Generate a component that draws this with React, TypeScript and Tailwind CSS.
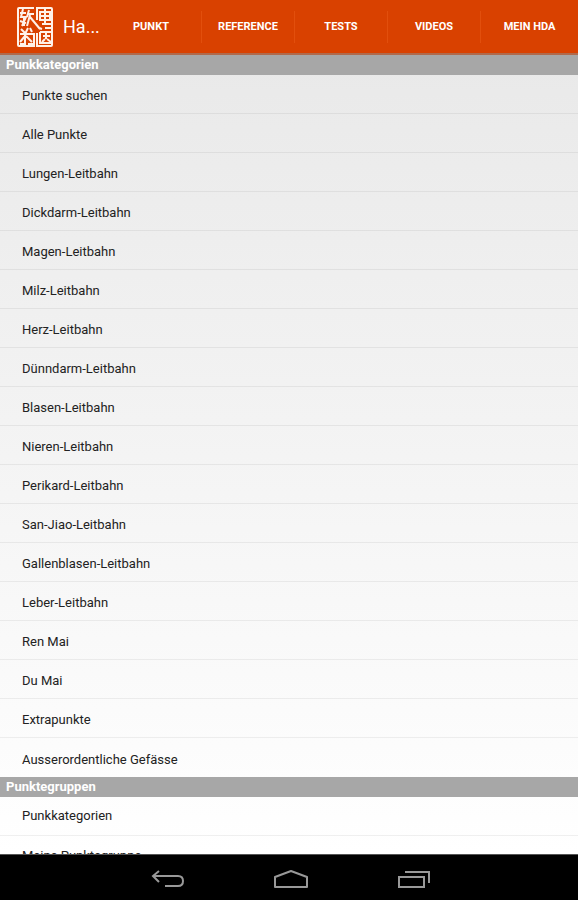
const tabs = ['PUNKT', 'REFERENCE', 'TESTS', 'VIDEOS', 'MEIN HDA'];

const sections = [
  {
    title: 'Punkkategorien',
    items: [
      'Punkte suchen',
      'Alle Punkte',
      'Lungen-Leitbahn',
      'Dickdarm-Leitbahn',
      'Magen-Leitbahn',
      'Milz-Leitbahn',
      'Herz-Leitbahn',
      'Dünndarm-Leitbahn',
      'Blasen-Leitbahn',
      'Nieren-Leitbahn',
      'Perikard-Leitbahn',
      'San-Jiao-Leitbahn',
      'Gallenblasen-Leitbahn',
      'Leber-Leitbahn',
      'Ren Mai',
      'Du Mai',
      'Extrapunkte',
      'Ausserordentliche Gefässe',
    ],
  },
  { title: 'Punktegruppen', items: ['Punkkategorien', 'Meine Punktegruppe'] },
];

function SealLogo() {
  return (
    <svg width="38" height="42" viewBox="0 0 38 42" fill="none" stroke="#fff1e8" aria-hidden="true" className="shrink-0">
      <path strokeWidth="2" d="M18 2H3Q2 2 2 3V39Q2 40 3 40H18V27M21 14V2H35Q36 2 36 3V39Q36 40 35 40H21V27" />
      <g strokeWidth="2">
        <path d="M4 7H10M7 3L5 11H10L6 20M8 12V20M4 15L10 17M13 4L11 11M12 8H18M14 9L11 20M14 11L24 23" />
        <path d="M5 23L9 27M12 22L9 28M4 28H17M9 27V39M9 30L4 36M10 30L16 36M14 22L16 26M4 38H8M12 38H17" />
        <path d="M24 6H34V14H24ZM29 3V19M24 10H34M26 18H35M29 22H35" />
        <path d="M24 26H35M24 26V37H35M27 30H34M30 27V33M29 33L26 36M31 33L35 36M23 22L26 23" />
      </g>
    </svg>
  );
}

function BackIcon() {
  return (
    <svg width="34" height="20" viewBox="0 0 34 20" fill="none" stroke="#999" strokeWidth="2" aria-hidden="true">
      <path d="M8 1L2 6L8 12M2 6H27Q32 6 32 11Q32 16 27 16H14" />
    </svg>
  );
}

function HomeIcon() {
  return (
    <svg width="36" height="20" viewBox="0 0 36 20" fill="none" stroke="#999" strokeWidth="2" aria-hidden="true">
      <path d="M2 17V7L18 1L34 7V17Z" strokeLinejoin="round" />
    </svg>
  );
}

function RecentIcon() {
  return (
    <svg width="34" height="20" viewBox="0 0 34 20" fill="none" stroke="#999" strokeWidth="2" aria-hidden="true">
      <path d="M2 7H27V17H2ZM8 2H32V13" />
    </svg>
  );
}

export default function App() {
  return (
    <div className="flex h-screen flex-col overflow-hidden bg-white font-['Roboto',sans-serif]">
      <header className="flex h-[55px] shrink-0 items-center border-b-2 border-[#b06a4c] bg-[#d94100] text-white">
        <h1 className="flex w-[101px] shrink-0 items-center gap-[9px] pl-4 text-lg font-normal">
          <SealLogo />
          Ha...
        </h1>
        <nav className="grid flex-1 grid-cols-[101fr_93fr_93fr_93fr_97fr] divide-x divide-[#e24f0d]">
          {tabs.map((tab) => (
            <button key={tab} type="button" className="h-8 pt-0.5 text-[11px] font-bold whitespace-nowrap">
              {tab}
            </button>
          ))}
        </nav>
      </header>

      <main className="min-h-0 flex-1 overflow-hidden bg-linear-to-b from-[#e9e9e9] to-white">
        {sections.map((section) => (
          <section key={section.title} className="first:[&_button]:pt-1">
            <h2 className="h-5 bg-[#a7a7a7] px-1.5 text-[13px] leading-5 font-bold text-white">
              {section.title}
            </h2>
            <ul>
              {section.items.map((item) => (
                <li key={item} className="h-[39px] border-b border-black/6 last:border-b-0">
                  <button type="button" className="h-full w-full px-[22px] text-left text-[13px] text-[#222]">
                    {item}
                  </button>
                </li>
              ))}
            </ul>
          </section>
        ))}
      </main>

      <footer className="flex h-[46px] shrink-0 items-center justify-center gap-[88px] border-t border-[#555] bg-black pt-1 pl-1">
        <button type="button" aria-label="Zurück">
          <BackIcon />
        </button>
        <button type="button" aria-label="Startseite">
          <HomeIcon />
        </button>
        <button type="button" aria-label="Letzte Apps">
          <RecentIcon />
        </button>
      </footer>
    </div>
  );
}
